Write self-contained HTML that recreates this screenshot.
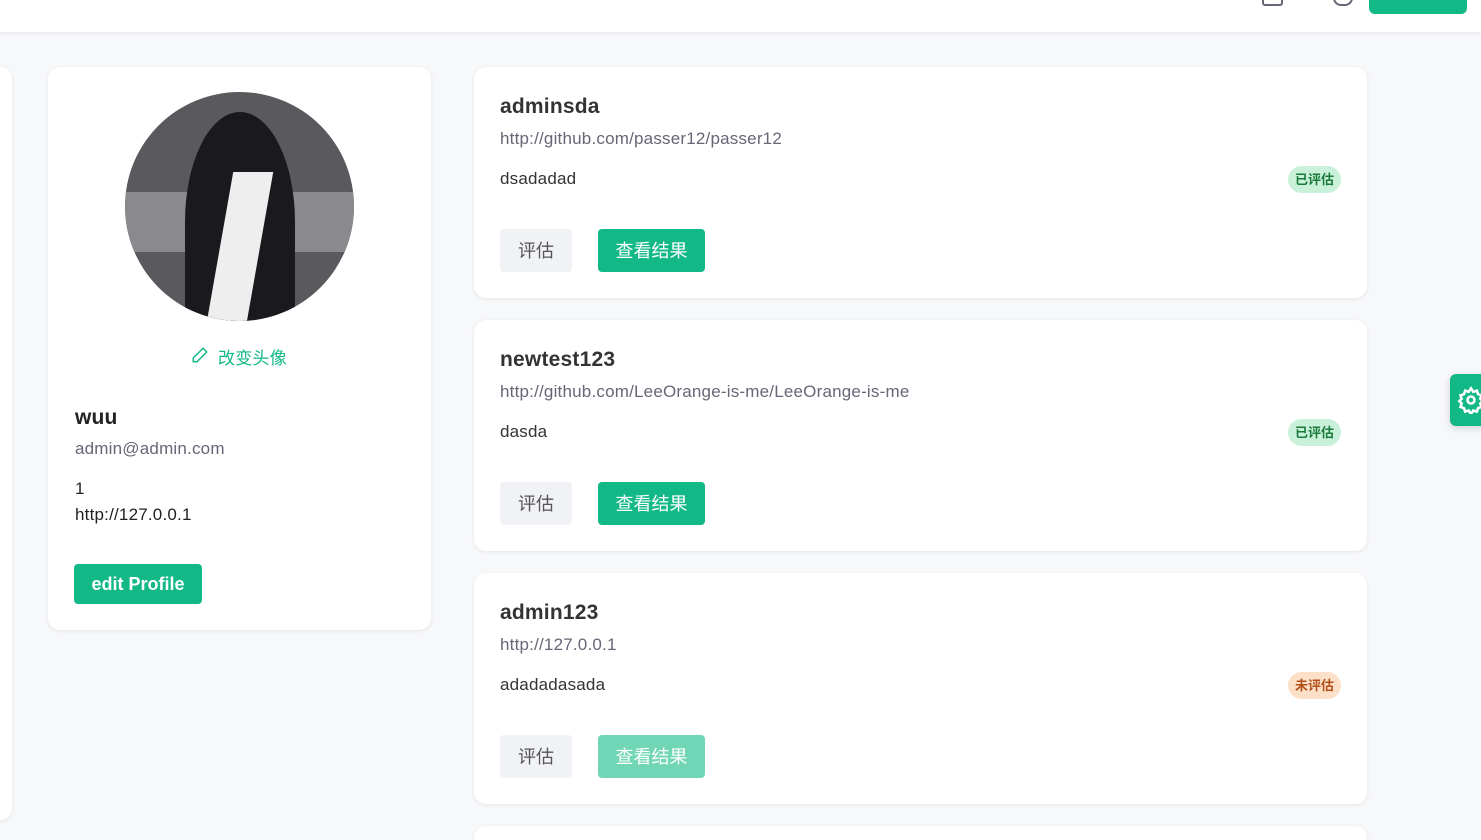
<!DOCTYPE html>
<html style="width:1481px;height:840px;overflow:hidden"><head><meta charset="utf-8"><style>
*{box-sizing:border-box;margin:0;padding:0}
body{width:1481px;height:840px;overflow:hidden;background:#f7f8fa;font-family:"Liberation Sans","Noto Sans CJK SC",sans-serif;position:relative;color:#333}
.hdr{position:absolute;left:0;top:0;width:1481px;height:32px;background:#fff;box-shadow:0 1px 4px rgba(0,0,0,.08)}
.card{position:absolute;background:#fff;border-radius:12px;box-shadow:0 1px 4px rgba(0,0,0,.08)}
.t{position:absolute;white-space:nowrap;letter-spacing:.2px}
.btn{position:absolute;height:43px;border-radius:4px;font-size:18px;line-height:45px;text-align:center}
.tag{position:absolute;left:814px;width:53px;height:27px;border-radius:14px;font-size:13px;line-height:27px;text-align:center;font-weight:bold}
</style></head><body>
<div class="hdr">
<div style="position:absolute;left:1262px;top:-6px;width:21px;height:12px;border:2px solid #667;border-radius:3px"></div>
<div style="position:absolute;left:1333px;top:-4px;width:20px;height:10px;border:2px solid #667;border-top:none;border-radius:0 0 8px 8px"></div>
<div style="position:absolute;left:1369px;top:-6px;width:98px;height:20px;background:#12b886;border-radius:6px"></div>
</div>
<div class="card" style="left:-20px;top:67px;width:32px;height:753px"></div>
<div class="card" style="left:48px;top:67px;width:383px;height:563px">
<div style="position:absolute;left:77px;top:25px;width:229px;height:229px;border-radius:50%;overflow:hidden;background:#5a5a5e">
<div style="position:absolute;left:0;top:100px;width:229px;height:60px;background:#8a8a8e"></div>
<div style="position:absolute;left:60px;top:20px;width:110px;height:220px;background:#1a1a1e;border-radius:50% 50% 0 0"></div>
<div style="position:absolute;left:95px;top:80px;width:40px;height:150px;background:#eee;transform:skew(-10deg)"></div>
</div>
<svg class="t" style="left:143px;top:279px" width="18" height="18" viewBox="0 0 24 24" fill="none" stroke="#12b886" stroke-width="2"><path d="M16 3l5 5L8 21H3v-5z"/></svg>
<div class="t" style="left:170px;top:277px;font-size:17px;color:#12b886">改变头像</div>
<div class="t" style="left:27px;top:339px;font-size:21px;font-weight:bold;color:#222">wuu</div>
<div class="t" style="left:27px;top:372px;font-size:17px;color:#667">admin@admin.com</div>
<div class="t" style="left:27px;top:412px;font-size:17px;color:#222">1</div>
<div class="t" style="left:27px;top:438px;font-size:17px;color:#222">http://127.0.0.1</div>
<div class="btn" style="left:26px;top:497px;width:128px;height:40px;line-height:40px;background:#12b886;color:#fff;font-weight:bold">edit Profile</div>
</div>

<div class="card" style="left:474px;top:67px;width:893px;height:231px">
<div class="t" style="left:26px;top:28px;font-size:21px;font-weight:bold;color:#333">adminsda</div>
<div class="t" style="left:26px;top:62px;font-size:17px;color:#667">http://github.com/passer12/passer12</div>
<div class="t" style="left:26px;top:102px;font-size:17px;color:#333">dsadadad</div>
<div class="tag" style="top:99px;background:#c9f0d9;color:#1a7a3a">已评估</div>
<div class="btn" style="left:26px;top:162px;width:72px;background:#f0f2f5;color:#555">评估</div>
<div class="btn" style="left:124px;top:162px;width:107px;background:#12b886;color:#fff">查看结果</div>
</div>
<div class="card" style="left:474px;top:320px;width:893px;height:231px">
<div class="t" style="left:26px;top:28px;font-size:21px;font-weight:bold;color:#333">newtest123</div>
<div class="t" style="left:26px;top:62px;font-size:17px;color:#667">http://github.com/LeeOrange-is-me/LeeOrange-is-me</div>
<div class="t" style="left:26px;top:102px;font-size:17px;color:#333">dasda</div>
<div class="tag" style="top:99px;background:#c9f0d9;color:#1a7a3a">已评估</div>
<div class="btn" style="left:26px;top:162px;width:72px;background:#f0f2f5;color:#555">评估</div>
<div class="btn" style="left:124px;top:162px;width:107px;background:#12b886;color:#fff">查看结果</div>
</div>
<div class="card" style="left:474px;top:573px;width:893px;height:231px">
<div class="t" style="left:26px;top:28px;font-size:21px;font-weight:bold;color:#333">admin123</div>
<div class="t" style="left:26px;top:62px;font-size:17px;color:#667">http://127.0.0.1</div>
<div class="t" style="left:26px;top:102px;font-size:17px;color:#333">adadadasada</div>
<div class="tag" style="top:99px;background:#fde0c8;color:#b3501a">未评估</div>
<div class="btn" style="left:26px;top:162px;width:72px;background:#f0f2f5;color:#555">评估</div>
<div class="btn" style="left:124px;top:162px;width:107px;background:#71d6b6;color:#fff">查看结果</div>
</div>
<div class="card" style="left:474px;top:826px;width:893px;height:40px"></div>

<div style="position:absolute;left:1450px;top:374px;width:40px;height:52px;background:#12b886;border-radius:6px;box-shadow:0 2px 8px rgba(0,0,0,.15)">
<svg style="position:absolute;left:7px;top:12px" width="28" height="28" viewBox="0 0 24 24" fill="none" stroke="#fff" stroke-width="2.2"><circle cx="12" cy="12" r="3"/><path d="M12 2l2 3 3-1 1 3 3 1-1 3 2 2-2 2 1 3-3 1-1 3-3-1-2 3-2-3-3 1-1-3-3-1 1-3-2-2 2-2-1-3 3-1 1-3 3 1z"/></svg>
</div>
</body></html>
